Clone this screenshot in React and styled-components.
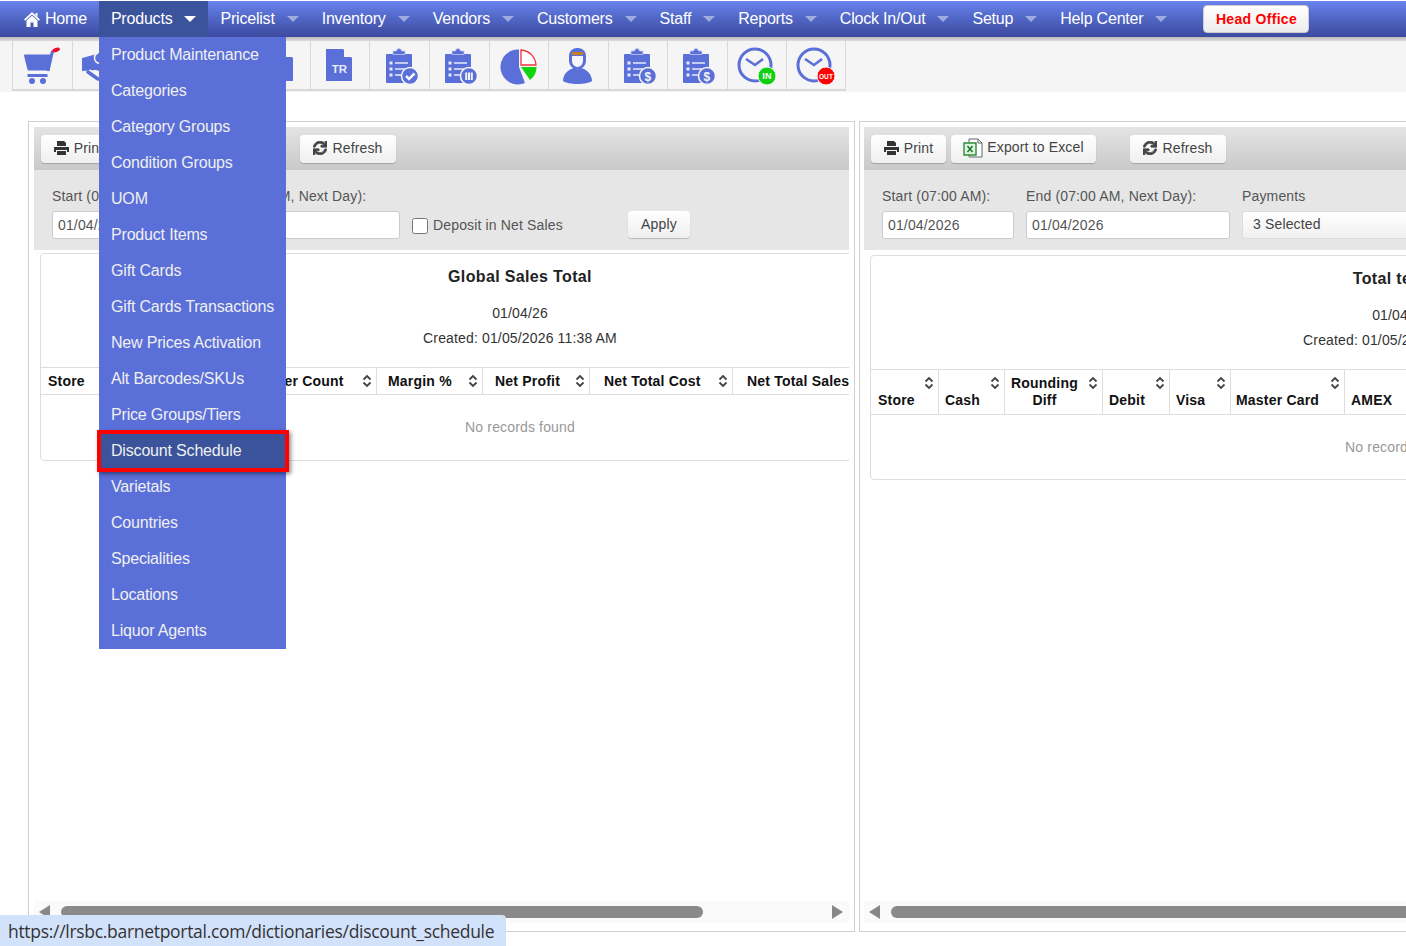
import React from 'react';
import styled, { createGlobalStyle } from 'styled-components';
import { FaSync } from 'react-icons/fa';

const BLUE = '#5a6fd8';

const GlobalStyle = createGlobalStyle`
  html, body { margin: 0; padding: 0; background: #fff; }
  body { font-family: "Liberation Sans", Arial, sans-serif; font-size: 14px; color: #333; overflow: hidden; letter-spacing: .15px; }
  * { box-sizing: border-box; }
`;

const Page = styled.div`
  position: relative;
  width: 1406px;
  height: 946px;
  overflow: hidden;
  padding-top: 1px;
`;

const Nav = styled.nav`
  display: flex;
  align-items: stretch;
  height: 36px;
  padding-left: 12px;
  background: linear-gradient(to bottom, #6a83ee 0%, #5268c8 45%, #3d4a9f 100%);
`;

const NavItem = styled.a`
  position: relative;
  display: flex;
  align-items: center;
  padding: 0 ${p => (p.$wide ? 12 : 11)}px 0 12px;
  color: #fff;
  font-size: 16px;
  letter-spacing: -.2px;
  background: ${p => (p.$open ? '#3a539b' : 'transparent')};
`;

const Caret = styled.span`
  width: 0;
  height: 0;
  margin-left: 12px;
  border-left: 6px solid transparent;
  border-right: 6px solid transparent;
  border-top: 6px solid ${p => (p.$open ? '#fff' : 'rgba(255,255,255,.45)')};
`;

const HomeIcon = styled.svg`
  width: 16px;
  height: 15px;
  margin-right: 5px;
  fill: #fff;
`;

const OfficeButton = styled.button`
  align-self: center;
  width: 106px;
  height: 28px;
  margin-left: 25px;
  padding-bottom: 2px;
  border: 1px solid #ccc;
  border-radius: 4px;
  background: linear-gradient(to bottom, #fff, #ececec);
  color: #f00;
  font: bold 14px "Liberation Sans", Arial, sans-serif;
  letter-spacing: .3px;
`;

const Dropdown = styled.ul`
  position: absolute;
  z-index: 5;
  left: 99px;
  top: 37px;
  width: 187px;
  margin: 0;
  padding: 0;
  list-style: none;
  background: ${BLUE};
`;

const DropdownItem = styled.li`
  position: relative;
  height: 36px;
  padding-left: 12px;
  line-height: 35px;
  font-size: 16px;
  letter-spacing: -.18px;
  color: #f0f0f0;
  background: ${p => (p.$active ? '#3a539b' : 'transparent')};

  ${p => p.$active && `
    &::after {
      content: "";
      position: absolute;
      left: -2px;
      right: -3px;
      top: -3px;
      bottom: -3px;
      border: 4px solid #f00;
      box-shadow: 2px 2px 4px rgba(0,0,0,.45);
    }
  `}
`;

const Strip = styled.div`
  height: 4px;
  background: linear-gradient(to bottom, #b9b9b9, #dcdcdc);
`;

const IconBar = styled.div`
  display: flex;
  height: 51px;
  padding-left: 12px;
  background: #f5f5f5;
`;

const IconCell = styled.div`
  display: flex;
  align-items: center;
  justify-content: center;
  flex: none;
  width: 59.57px;
  height: 50px;
  border-left: 1px solid #d8d8d8;
  border-bottom: 2px solid #d8d8d8;
  ${p => p.$last && 'border-right: 1px solid #d8d8d8;'}

  svg { width: 40px; height: 40px; display: block; margin-left: -2px; }
`;

const Panels = styled.main`
  display: flex;
  gap: 4px;
  padding: 29px 0 0 28px;
`;

const Panel = styled.section`
  display: flex;
  flex-direction: column;
  flex: none;
  width: ${p => p.$width}px;
  height: 811px;
  padding: 5px 5px 8px ${p => p.$inset}px;
  border: 1px solid #d0d0d0;
  overflow: hidden;
`;

const ToolBand = styled.div`
  display: flex;
  align-items: center;
  flex: none;
  height: 43px;
  padding-left: 7px;
  background: linear-gradient(to bottom, #e4e4e4, #c9c9c9);
`;

const ToolButton = styled.button`
  display: flex;
  align-items: center;
  justify-content: center;
  gap: ${p => p.$iconGap || 5}px;
  flex: none;
  width: ${p => p.$width}px;
  height: 28px;
  margin-left: ${p => p.$gap || 0}px;
  padding: 0 0 1px;
  border: 0;
  border-radius: 4px;
  background: linear-gradient(to bottom, #fff, #efefef);
  box-shadow: 0 1px 1px rgba(0,0,0,.2);
  color: #444;
  font: 14px "Liberation Sans", Arial, sans-serif;
  letter-spacing: .15px;

  svg { flex: none; }
`;

const RefreshIcon = styled(FaSync)`
  width: 14px;
  height: 14px;
  stroke: currentColor;
  stroke-width: 30px;
`;

const ExcelLabel = styled.span`
  position: relative;
  top: -1px;
`;

const FilterBand = styled.div`
  display: flex;
  align-items: flex-end;
  gap: 12px;
  flex: none;
  height: 80px;
  padding: 0 18px 11px;
  background: #e6e6e6;
`;

const Field = styled.label`
  display: flex;
  flex-direction: column;
  gap: 5px;
  flex: none;
  width: ${p => p.$width}px;
  color: #555;
`;

const FieldLabel = styled.span`
  height: 20px;
  line-height: 20px;
  white-space: nowrap;
`;

const DateInput = styled.input`
  width: 100%;
  height: 28px;
  padding: 0 5px;
  border: 1px solid #ccc;
  border-radius: 3px;
  background: #fff;
  color: #555;
  font: 14px "Liberation Sans", Arial, sans-serif;
  letter-spacing: .15px;
`;

const SelectBox = styled.div`
  height: 28px;
  padding-left: 10px;
  line-height: 25px;
  border: 1px solid #ddd;
  border-radius: 3px;
  background: linear-gradient(to bottom, #fff, #f0f0f0);
  color: #444;
`;

const CheckLabel = styled.label`
  display: flex;
  align-items: center;
  gap: 5px;
  width: 204px;
  height: 28px;
  color: #555;
  white-space: nowrap;
`;

const Check = styled.input`
  width: 16px;
  height: 16px;
  margin: 2px 0 0 0;
`;

const ApplyButton = styled(ToolButton)`
  height: 27px;
  margin-bottom: 1px;
`;

const CardClip = styled.div`
  flex: none;
  padding: ${p => p.$top}px 0 0 6px;
  overflow: hidden;
`;

const Card = styled.div`
  width: ${p => p.$width}px;
  border: 1px solid #ddd;
  border-radius: 4px;
  background: #fff;
`;

const CardHead = styled.header`
  display: flex;
  flex-direction: column;
  align-items: center;
  height: 114px;
  padding-top: 12px;
  border-bottom: 1px solid #ddd;
  color: #333;
`;

const CardTitle = styled.h2`
  margin: 0;
  font-size: 16px;
  line-height: 22px;
  letter-spacing: .35px;
  color: #222;
`;

const CardDate = styled.div`
  margin-top: 15px;
  line-height: 20px;
`;

const CardCreated = styled.div`
  margin-top: 5px;
  line-height: 20px;
`;

const HeadRow = styled.div`
  display: flex;
  height: ${p => p.$height}px;
  border-bottom: 1px solid #ddd;
`;

const HeadCell = styled.div`
  position: relative;
  display: flex;
  align-items: flex-end;
  flex: none;
  width: ${p => p.$width}px;
  padding: 0 0 ${p => p.$bottom}px ${p => p.$pad}px;
  border-right: 1px solid #ddd;
  color: #111;
  font-weight: bold;
  line-height: 17px;
  white-space: pre-line;
  text-align: center;
  letter-spacing: .2px;
`;

const SortMark = styled.svg`
  position: absolute;
  right: 4px;
  top: 6px;
  width: 10px;
  height: 14px;
`;

const Empty = styled.div`
  height: ${p => p.$height}px;
  line-height: ${p => p.$height}px;
  text-align: center;
  color: #999;
`;

const ScrollTrack = styled.div`
  display: flex;
  align-items: center;
  flex: none;
  height: 22px;
  margin-top: auto;
  padding-left: 5px;
  background: #fafafa;
`;

const ScrollArrow = styled.span`
  flex: none;
  width: 0;
  height: 0;
  border-top: 7px solid transparent;
  border-bottom: 7px solid transparent;
  ${p => (p.$dir === 'left' ? 'border-right: 11px solid #888;' : 'border-left: 11px solid #888;')}
`;

const ScrollThumb = styled.span`
  flex: none;
  width: ${p => p.$width}px;
  height: 12px;
  margin: 0 129px 0 ${p => p.$lead}px;
  border-radius: 6px;
  background: #8a8a8a;
`;

const StatusTip = styled.div`
  position: absolute;
  z-index: 6;
  left: 0;
  bottom: 0;
  width: 506px;
  height: 31px;
  padding-left: 8px;
  border-top-right-radius: 4px;
  background: #d3e2fb;
  color: #333;
  font: 17.5px/32px "Open Sans", "Noto Sans", sans-serif;
  letter-spacing: -.3px;
  white-space: nowrap;
`;

/* toolbar drawings */
const CartIcon = () => (
  <svg viewBox="0 0 40 40">
    <path d="M4 10.500h26l-2.500 14h-20z" fill={BLUE} stroke={BLUE} strokeWidth="2" strokeLinejoin="round" />
    <path d="M27 26l4.500-20" fill="none" stroke={BLUE} strokeWidth="3" />
    <path d="M6.500 30.500h20" fill="none" stroke={BLUE} strokeWidth="3" />
    <circle cx="11" cy="36" r="3" fill={BLUE} />
    <circle cx="22" cy="36" r="3" fill={BLUE} />
    <ellipse cx="35" cy="5" rx="4" ry="2" transform="rotate(-18 35 5)" fill="#e8112d" />
  </svg>
);

const MegaphoneIcon = () => (
  <svg viewBox="0 0 40 40">
    <path d="M1 13L16 9l14-1v22l-15-5-14 1z" fill={BLUE} />
    <circle cx="19" cy="13" r="5.500" fill={BLUE} stroke="#f5f5f5" strokeWidth="1.500" />
    <path d="M7 27l10 7" fill="none" stroke="#f5f5f5" strokeWidth="6.500" />
    <path d="M7 27l10 7" fill="none" stroke={BLUE} strokeWidth="3.500" strokeLinecap="round" />
  </svg>
);

const DocIcon = ({ label }) => (
  <svg viewBox="0 0 40 40">
    <path d="M7 4h17l9 9v23H7z" fill={BLUE} />
    <path d="M25 4l8 8h-8z" fill="#f5f5f5" />
    <text x="20.500" y="28" fontFamily="Liberation Sans" fontWeight="bold" fontSize="11.500" fill="#e8ebfa" textAnchor="middle">{label}</text>
  </svg>
);

const ClipboardIcon = ({ children }) => (
  <svg viewBox="0 0 40 40">
    <rect x="7" y="9" width="26" height="29" rx="1" fill={BLUE} />
    <path d="M14 9.500V6h3.500a2.500 2.500 0 0 1 5 0H26v3.500z" fill={BLUE} stroke="#c4cbf0" strokeWidth=".8" />
    <path d="M10.500 16.500h3v3h-3zM16 17.200h13v1.500H16zM10.500 22.500h3v3h-3zM16 23.200h10v1.500H16zM10.500 28.500h3v3h-3zM16 29.200h6v1.500h-6z" fill="#e8ebfa" />
    <circle cx="31" cy="31" r="8.500" fill={BLUE} stroke="#f5f5f5" strokeWidth="1.500" />
    {children}
  </svg>
);

const CheckBadge = () => <path d="M27 31l3 3 5.500-5.500" fill="none" stroke="#f5f5f5" strokeWidth="2.500" />;
const BarsBadge = () => <path d="M27.200 27.500h2v7.500h-2zM30 27.500h2v7.500h-2zM32.800 27.500h2v7.500h-2z" fill="#f5f5f5" />;
const DollarBadge = () => (
  <text x="31" y="35.500" fontFamily="Liberation Sans" fontWeight="bold" fontSize="12" fill="#f5f5f5" textAnchor="middle">$</text>
);

const PieIcon = () => (
  <svg viewBox="0 0 40 40">
    <path d="M21 4.500V22l6 16A17.500 17.500 0 1 1 21 4.500z" fill={BLUE} />
    <path d="M23 5a16 16 0 0 1 15 15H23z" fill="#fff" stroke="#f0323c" strokeWidth="1.300" />
    <path d="M23 22h15.500a16 16 0 0 1-6.500 13z" fill="#11d411" />
  </svg>
);

const PersonIcon = () => (
  <svg viewBox="0 0 40 40">
    <path d="M6 36c0-8 7-12 12-13.500l2.500 2 2.500-2C28 24 35 28 35 36c-5 4-24 4-29 0z" fill={BLUE} />
    <rect x="12" y="3" width="17" height="21" rx="8" fill={BLUE} />
    <path d="M15 11h11v5a5.500 6 0 0 1-11 0z" fill="#f5f5f5" />
    <path d="M15 7h11v3H15z" fill="#c77f22" />
  </svg>
);

const ClockIcon = ({ label, color, size }) => (
  <svg viewBox="0 0 40 40">
    <circle cx="19" cy="20" r="16" fill="none" stroke={BLUE} strokeWidth="3" />
    <path d="M10 14l9 6 8-6" fill="none" stroke={BLUE} strokeWidth="2.500" />
    <circle cx="31" cy="31" r="9" fill={color} stroke="#f5f5f5" strokeWidth="1" />
    <text x="31" y="34" fontFamily="Liberation Sans" fontWeight="bold" fontSize={size} fill="#fff" textAnchor="middle">{label}</text>
  </svg>
);

const ExcelIcon = () => (
  <svg viewBox="0 0 20 20" width="20" height="20">
    <path d="M6 1h9l4 4v14H6z" fill="#fff" stroke="#666" />
    <path d="M15 1v4h4" fill="none" stroke="#666" />
    <path d="M1 5h12v12H1z" fill="#dff3df" stroke="#2e8b3a" strokeWidth="1.400" />
    <path d="M4.500 8l5 6M9.500 8l-5 6" stroke="#1f7a2e" strokeWidth="1.600" />
  </svg>
);

const PrintIcon = () => (
  <svg viewBox="0 0 15 14" width="15" height="14">
    <path d="M3 0h7l2 2v3H3z" fill="#333" />
    <path d="M0 6h15v5h-2V9H2v2H0z" fill="#333" />
    <path d="M3 10h9v4H3z" fill="#333" />
  </svg>
);

const Sort = () => (
  <SortMark viewBox="0 0 10 14">
    <path d="M1.500 5.500L5 2l3.500 3.500M1.500 8.500L5 12l3.500-3.500" fill="none" stroke="#444" strokeWidth="1.800" />
  </SortMark>
);

const navItems = ['Pricelist', 'Inventory', 'Vendors', 'Customers', 'Staff', 'Reports', 'Clock In/Out', 'Setup', 'Help Center'];

const menuItems = [
  'Product Maintenance', 'Categories', 'Category Groups', 'Condition Groups', 'UOM', 'Product Items',
  'Gift Cards', 'Gift Cards Transactions', 'New Prices Activation', 'Alt Barcodes/SKUs', 'Price Groups/Tiers',
  'Discount Schedule', 'Varietals', 'Countries', 'Specialities', 'Locations', 'Liquor Agents',
];

const toolIcons = [
  <CartIcon />,
  <MegaphoneIcon />,
  <DocIcon label="" />,
  <DocIcon label="" />,
  <DocIcon label="" />,
  <DocIcon label="TR" />,
  <ClipboardIcon><CheckBadge /></ClipboardIcon>,
  <ClipboardIcon><BarsBadge /></ClipboardIcon>,
  <PieIcon />,
  <PersonIcon />,
  <ClipboardIcon><DollarBadge /></ClipboardIcon>,
  <ClipboardIcon><DollarBadge /></ClipboardIcon>,
  <ClockIcon label="IN" color="#0fd10f" size="9" />,
  <ClockIcon label="OUT" color="#f00" size="6.500" />,
];

const salesCols = [
  { label: 'Store', width: 110, pad: 7 },
  { label: 'Order Count', width: 226, pad: 108 },
  { label: 'Margin %', width: 106, pad: 11 },
  { label: 'Net Profit', width: 107, pad: 12 },
  { label: 'Net Total Cost', width: 143, pad: 14 },
  { label: 'Net Total Sales', width: 150, pad: 14 },
];

const tenderCols = [
  { label: 'Store', width: 68, pad: 7 },
  { label: 'Cash', width: 66, pad: 6 },
  { label: 'Rounding\nDiff', width: 98, pad: 6 },
  { label: 'Debit', width: 67, pad: 6 },
  { label: 'Visa', width: 61, pad: 6 },
  { label: 'Master Card', width: 114, pad: 5 },
  { label: 'AMEX', width: 114, pad: 6 },
];

const Toolbar = () => (
  <ToolBand>
    <ToolButton $width={75}><PrintIcon />Print</ToolButton>
    <ToolButton $width={145} $gap={5} $iconGap={4}><ExcelIcon /><ExcelLabel>Export to Excel</ExcelLabel></ToolButton>
    <ToolButton $width={96} $gap={34}><RefreshIcon />Refresh</ToolButton>
  </ToolBand>
);

const DateField = ({ label, width }) => (
  <Field $width={width}>
    <FieldLabel>{label}</FieldLabel>
    <DateInput readOnly value="01/04/2026" />
  </Field>
);

const ReportCard = ({ width, top, title, cols, headHeight, headBottom, emptyHeight }) => (
  <CardClip $top={top}>
    <Card $width={width}>
      <CardHead>
        <CardTitle>{title}</CardTitle>
        <CardDate>01/04/26</CardDate>
        <CardCreated>Created: 01/05/2026 11:38 AM</CardCreated>
      </CardHead>
      <HeadRow $height={headHeight}>
        {cols.map(c => (
          <HeadCell key={c.label} $width={c.width} $pad={c.pad} $bottom={headBottom}>
            {c.label}
            <Sort />
          </HeadCell>
        ))}
      </HeadRow>
      <Empty $height={emptyHeight}>No records found</Empty>
    </Card>
  </CardClip>
);

const App = () => (
  <Page>
    <GlobalStyle />
    <Nav>
      <NavItem $wide>
        <HomeIcon viewBox="0 0 16 15">
          <path d="M8 0l8 7.500-1.200 1.300L8 2.500 1.200 8.800 0 7.500z" />
          <path d="M2.500 8.500L8 3.800l5.500 4.700V15H9.500v-4.500h-3V15h-4z" />
          <path d="M11.500 1h2v4l-2-2z" />
        </HomeIcon>
        Home
      </NavItem>
      <NavItem $open $wide>Products<Caret $open /></NavItem>
      {navItems.map(n => <NavItem key={n}>{n}<Caret /></NavItem>)}
      <OfficeButton>Head Office</OfficeButton>
    </Nav>
    <Dropdown>
      {menuItems.map(m => <DropdownItem key={m} $active={m === 'Discount Schedule'}>{m}</DropdownItem>)}
    </Dropdown>
    <Strip />
    <IconBar>
      {toolIcons.map((icon, i) => <IconCell key={i} $last={i === toolIcons.length - 1}>{icon}</IconCell>)}
    </IconBar>
    <Panels>
      <Panel $width={827} $inset={5}>
        <Toolbar />
        <FilterBand>
          <DateField label="Start (07:00 AM):" width={132} />
          <DateField label="End (07:00 AM, Next Day):" width={204} />
          <CheckLabel><Check type="checkbox" />Deposit in Net Sales</CheckLabel>
          <ApplyButton $width={62}>Apply</ApplyButton>
        </FilterBand>
        <ReportCard width={960} top={3} title="Global Sales Total" cols={salesCols} headHeight={27} headBottom={4} emptyHeight={65} />
        <ScrollTrack>
          <ScrollArrow $dir="left" />
          <ScrollThumb $width={642} $lead={11} />
          <ScrollArrow $dir="right" />
        </ScrollTrack>
      </Panel>
      <Panel $width={1100} $inset={4}>
        <Toolbar />
        <FilterBand>
          <DateField label="Start (07:00 AM):" width={132} />
          <DateField label="End (07:00 AM, Next Day):" width={204} />
          <Field $width={300}>
            <FieldLabel>Payments</FieldLabel>
            <SelectBox>3 Selected</SelectBox>
          </Field>
        </FilterBand>
        <ReportCard width={1060} top={5} title="Total tender" cols={tenderCols} headHeight={45} headBottom={5} emptyHeight={64} />
        <ScrollTrack>
          <ScrollArrow $dir="left" />
          <ScrollThumb $width={700} $lead={11} />
        </ScrollTrack>
      </Panel>
    </Panels>
    <StatusTip>https://lrsbc.barnetportal.com/dictionaries/discount_schedule</StatusTip>
  </Page>
);

export default App;
